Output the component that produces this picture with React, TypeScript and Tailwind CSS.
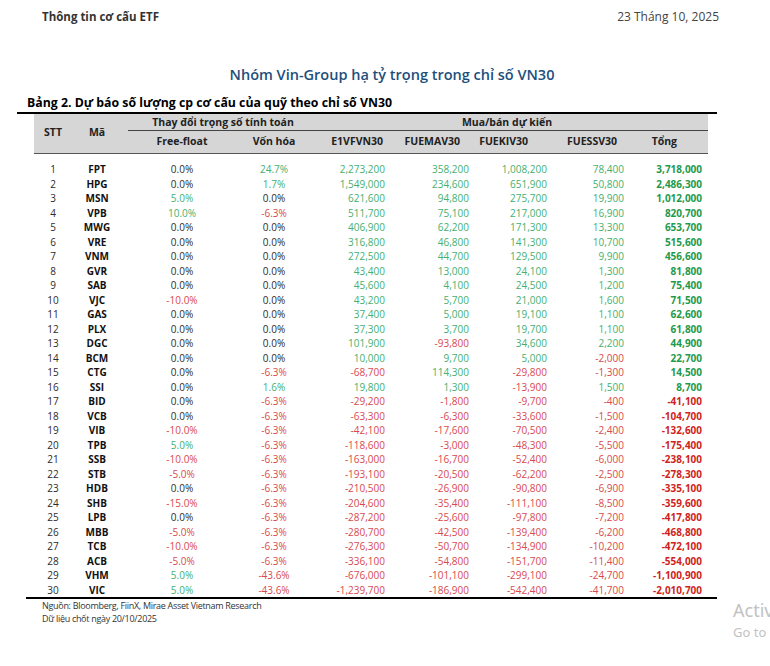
import React from 'react';

type Row = [string, string, string, string, string, string, string, string, string];

const rows: Row[] = [
  ['1', 'FPT', '0.0%', '24.7%', '2,273,200', '358,200', '1,008,200', '78,400', '3,718,000'],
  ['2', 'HPG', '0.0%', '1.7%', '1,549,000', '234,600', '651,900', '50,800', '2,486,300'],
  ['3', 'MSN', '5.0%', '0.0%', '621,600', '94,800', '275,700', '19,900', '1,012,000'],
  ['4', 'VPB', '10.0%', '-6.3%', '511,700', '75,100', '217,000', '16,900', '820,700'],
  ['5', 'MWG', '0.0%', '0.0%', '406,900', '62,200', '171,300', '13,300', '653,700'],
  ['6', 'VRE', '0.0%', '0.0%', '316,800', '46,800', '141,300', '10,700', '515,600'],
  ['7', 'VNM', '0.0%', '0.0%', '272,500', '44,700', '129,500', '9,900', '456,600'],
  ['8', 'GVR', '0.0%', '0.0%', '43,400', '13,000', '24,100', '1,300', '81,800'],
  ['9', 'SAB', '0.0%', '0.0%', '45,600', '4,100', '24,500', '1,200', '75,400'],
  ['10', 'VJC', '-10.0%', '0.0%', '43,200', '5,700', '21,000', '1,600', '71,500'],
  ['11', 'GAS', '0.0%', '0.0%', '37,400', '5,000', '19,100', '1,100', '62,600'],
  ['12', 'PLX', '0.0%', '0.0%', '37,300', '3,700', '19,700', '1,100', '61,800'],
  ['13', 'DGC', '0.0%', '0.0%', '101,900', '-93,800', '34,600', '2,200', '44,900'],
  ['14', 'BCM', '0.0%', '0.0%', '10,000', '9,700', '5,000', '-2,000', '22,700'],
  ['15', 'CTG', '0.0%', '-6.3%', '-68,700', '114,300', '-29,800', '-1,300', '14,500'],
  ['16', 'SSI', '0.0%', '1.6%', '19,800', '1,300', '-13,900', '1,500', '8,700'],
  ['17', 'BID', '0.0%', '-6.3%', '-29,200', '-1,800', '-9,700', '-400', '-41,100'],
  ['18', 'VCB', '0.0%', '-6.3%', '-63,300', '-6,300', '-33,600', '-1,500', '-104,700'],
  ['19', 'VIB', '-10.0%', '-6.3%', '-42,100', '-17,600', '-70,500', '-2,400', '-132,600'],
  ['20', 'TPB', '5.0%', '-6.3%', '-118,600', '-3,000', '-48,300', '-5,500', '-175,400'],
  ['21', 'SSB', '-10.0%', '-6.3%', '-163,000', '-16,700', '-52,400', '-6,000', '-238,100'],
  ['22', 'STB', '-5.0%', '-6.3%', '-193,100', '-20,500', '-62,200', '-2,500', '-278,300'],
  ['23', 'HDB', '0.0%', '-6.3%', '-210,500', '-26,900', '-90,800', '-6,900', '-335,100'],
  ['24', 'SHB', '-15.0%', '-6.3%', '-204,600', '-35,400', '-111,100', '-8,500', '-359,600'],
  ['25', 'LPB', '0.0%', '-6.3%', '-287,200', '-25,600', '-97,800', '-7,200', '-417,800'],
  ['26', 'MBB', '-5.0%', '-6.3%', '-280,700', '-42,500', '-139,400', '-6,200', '-468,800'],
  ['27', 'TCB', '-10.0%', '-6.3%', '-276,300', '-50,700', '-134,900', '-10,200', '-472,100'],
  ['28', 'ACB', '-5.0%', '-6.3%', '-336,100', '-54,800', '-151,700', '-11,400', '-554,000'],
  ['29', 'VHM', '5.0%', '-43.6%', '-676,000', '-101,100', '-299,100', '-24,700', '-1,100,900'],
  ['30', 'VIC', '5.0%', '-43.6%', '-1,239,700', '-186,900', '-542,400', '-41,700', '-2,010,700'],
];

// regular cells: light green / light red, zero stays dark
const tone = (v: string) => {
  if (v.startsWith('-')) return 'text-[#d9494c]';
  if (v === '0.0%') return 'text-[#2b2b2b]';
  return 'text-[#44b070]';
};

const totalTone = (v: string) => (v.startsWith('-') ? 'text-[#d01f22]' : 'text-[#1e9a4c]');

const App: React.FC = () => {
  return (
    <div className="relative w-[770px] h-[666px] overflow-hidden bg-white font-['Open_Sans',sans-serif] text-[#2b2b2b]">
      <div className="flex justify-between pt-[9px] pl-[42px] pr-[51px] leading-[16px]">
        <span className="text-[11.5px] font-bold text-[#333]">Thông tin cơ cấu ETF</span>
        <span className="text-[12px] text-[#444]">23 Tháng 10, 2025</span>
      </div>

      <h1 className="mt-[40px] pl-[14px] text-center text-[14.5px] leading-[20px] font-semibold text-[#1d4f7c]">
        Nhóm Vin-Group hạ tỷ trọng trong chỉ số VN30
      </h1>

      <p className="mt-[10px] ml-[27px] text-[12.3px] leading-[16px] font-bold text-black">
        Bảng 2. Dự báo số lượng cp cơ cấu của quỹ theo chỉ số VN30
      </p>

      <div className="mt-[1px] ml-[17px] w-[700px] h-[2px] bg-black" />

      <table className="ml-[34px] w-[674px] table-fixed border-collapse text-[10px]">
        <colgroup>
          <col className="w-[38px]" />
          <col className="w-[50px]" />
          <col className="w-[120px]" />
          <col className="w-[64px]" />
          <col className="w-[84px]" />
          <col className="w-[84px]" />
          <col className="w-[78px]" />
          <col className="w-[77px]" />
          <col className="w-[79px]" />
        </colgroup>
        <thead className="bg-[#d6d6d6] text-[10.5px] font-bold text-[#222]">
          <tr className="h-[17px]">
            <th rowSpan={2} className="p-0 text-center align-middle border-b border-[#555]">STT</th>
            <th rowSpan={2} className="p-0 text-center align-middle border-b border-[#555]">Mã</th>
            <th colSpan={2} className="p-0 font-bold">
              <div className="ml-[6px] h-[17px] leading-[16px] border-b border-[#444] pl-[12px] text-center">
                Thay đổi trọng số tính toán
              </div>
            </th>
            <th colSpan={5} className="p-0 font-bold">
              <div className="h-[17px] leading-[16px] border-b border-[#444] text-center">Mua/bán dự kiến</div>
            </th>
          </tr>
          <tr className="h-[22px] border-b border-[#555]">
            <th className="p-0 text-center">Free-float</th>
            <th className="p-0 text-center">Vốn hóa</th>
            <th className="p-0 pr-[7px] text-right">E1VFVN30</th>
            <th className="p-0 pr-[14px] text-right">FUEMAV30</th>
            <th className="p-0 pr-[24px] text-right">FUEKIV30</th>
            <th className="p-0 pr-[12px] text-right">FUESSV30</th>
            <th className="p-0 pr-[31px] text-right">Tổng</th>
          </tr>
        </thead>
        <tbody>
          <tr className="h-[9px]">
            <td colSpan={9} className="p-0" />
          </tr>
          {rows.map((r) => (
            <tr key={r[0]} className="h-[14.5px] leading-[14.5px]">
              <td className="p-0 text-center">{r[0]}</td>
              <td className="p-0 text-center font-bold text-[#111]">{r[1]}</td>
              <td className={`p-0 text-center ${tone(r[2])}`}>{r[2]}</td>
              <td className={`p-0 text-center ${tone(r[3])}`}>{r[3]}</td>
              <td className={`p-0 pr-[5px] text-right ${tone(r[4])}`}>{r[4]}</td>
              <td className={`p-0 pr-[5px] text-right ${tone(r[5])}`}>{r[5]}</td>
              <td className={`p-0 pr-[5px] text-right ${tone(r[6])}`}>{r[6]}</td>
              <td className={`p-0 pr-[5px] text-right ${tone(r[7])}`}>{r[7]}</td>
              <td className={`p-0 pr-[6px] text-right font-bold ${totalTone(r[8])}`}>{r[8]}</td>
            </tr>
          ))}
        </tbody>
      </table>

      <div className="ml-[26px] w-[691px] h-[2px] bg-black" />

      <div className="pl-[42px] text-[9px] leading-[13px] tracking-[-0.3px] text-[#333]">
        <p>Nguồn: Bloomberg, FiinX, Mirae Asset Vietnam Research</p>
        <p>Dữ liệu chốt ngày 20/10/2025</p>
      </div>

      {/* windows activation watermark, runs off the right edge like the screenshot */}
      <div className="absolute left-[733px] top-[597px] whitespace-nowrap text-[#c2c2c2] font-['Noto_Sans',sans-serif]">
        <p className="text-[18px] leading-[26px]">Activate Windows</p>
        <p className="text-[13px] leading-[18px]">Go to Settings</p>
      </div>
    </div>
  );
};

export default App;
